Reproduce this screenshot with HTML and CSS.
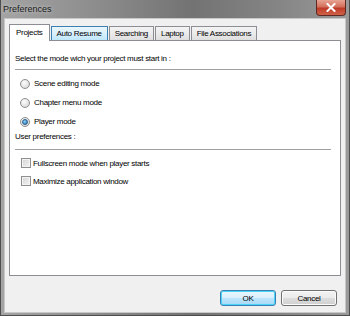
FILE: index.html
```html
<!DOCTYPE html>
<html lang="en">
<head>
    <meta charset="UTF-8">
    <title>Preferences</title>
    <link rel="stylesheet" href="styles.css">
</head>
<body>
    <div id="window">
        <div class="titlebar">
            <span class="title">Preferences</span>
            <div class="close-btn">
                <svg width="10" height="9" viewBox="0 0 10 9">
                    <path d="M1.5 1 L8.5 8 M8.5 1 L1.5 8" stroke="#fff" stroke-width="2" stroke-linecap="square"/>
                </svg>
            </div>
        </div>
        <div class="client">
            <div class="tabs">
                <div class="tab active">Projects</div>
                <div class="tab hover">Auto Resume</div>
                <div class="tab">Searching</div>
                <div class="tab">Laptop</div>
                <div class="tab">File Associations</div>
            </div>
            <div class="panel">
                <div class="section-title">Select the mode wich your project must start in :</div>
                <div class="sep"></div>
                <div class="options">
                    <label class="option radio-row"><span class="radio"></span>Scene editing mode</label>
                    <label class="option radio-row"><span class="radio"></span>Chapter menu mode</label>
                    <label class="option radio-row"><span class="radio checked"></span>Player mode</label>
                </div>
                <div class="section-title second">User preferences :</div>
                <div class="sep sep2"></div>
                <div class="options">
                    <label class="option check-row"><span class="checkbox"></span>Fullscreen mode when player starts</label>
                    <label class="option check-row"><span class="checkbox"></span>Maximize application window</label>
                </div>
            </div>
            <div class="buttons">
                <button class="default">OK</button>
                <button>Cancel</button>
            </div>
        </div>
    </div>
</body>
</html>
```

FILE: styles.css
```css
body {
    margin: 0;
    padding: 0;
    font-family: "Liberation Sans", Arial, sans-serif;
    font-size: 8px;
    letter-spacing: -0.3px;
    color: #000;
    background: #6b6b6b;
}

#window {
    width: 350px;
    height: 316px;
    display: flex;
    flex-direction: column;
    background: linear-gradient(to right, #a4a4a4, #8a8a8a 30%, #737373 55%, #858585 80%, #9a9a9a);
    box-sizing: border-box;
    border: 1px solid #4e4e4e;
    border-top: none;
}

.titlebar {
    height: 18px;
    position: relative;
    display: flex;
    align-items: center;
    padding-left: 2px;
}

.title {
    font-size: 9px;
    letter-spacing: 0;
    color: #1a1a1a;
    text-shadow: 0 0 4px rgba(255, 255, 255, 0.6);
}

.close-btn {
    position: absolute;
    right: 3px;
    top: 0;
    width: 30px;
    height: 16px;
    box-sizing: border-box;
    border: 1px solid #5c2a22;
    border-top: none;
    border-radius: 0 0 4px 4px;
    background: linear-gradient(to bottom, #e8a493, #d3705c 45%, #be3b26 55%, #d0624a);
    display: flex;
    align-items: center;
    justify-content: center;
}

.client {
    flex: 1;
    margin: 0 3px 2px 3px;
    background: #f0f0f0;
    border: 1px solid #c8c8c8;
    padding: 5px 4px 0 4px;
    display: flex;
    flex-direction: column;
}

.tabs {
    display: flex;
    align-items: flex-end;
    height: 16px;
    position: relative;
    z-index: 1;
}

.tab {
    height: 14px;
    box-sizing: border-box;
    padding: 0 5px;
    margin-right: 1px;
    line-height: 13px;
    border: 1px solid #8c8e94;
    border-bottom: none;
    background: linear-gradient(to bottom, #f3f3f3, #ebebeb 50%, #dedede);
}

.tab.hover {
    border-color: #3c7fb1;
    background: linear-gradient(to bottom, #eaf6fd, #d9f0fc 50%, #bee6fd);
}

.tab.active {
    height: 17px;
    margin-bottom: -1px;
    padding: 0 6px 0 6px;
    line-height: 15px;
    background: #fff;
}

.panel {
    height: 236px;
    box-sizing: border-box;
    background: #fff;
    border: 1px solid #8c8e94;
    padding: 0 5px;
}

.section-title {
    margin-top: 13px;
    height: 10px;
    line-height: 10px;
}

.section-title.second {
    margin-top: 1px;
}

.sep {
    margin-top: 5px;
    height: 1px;
    background: #a0a0a0;
    margin-right: 4px;
}

.sep2 {
    margin-top: 7px;
}

.options {
    margin-top: 4px;
}

.option {
    display: flex;
    align-items: center;
}

.radio-row {
    height: 19px;
    padding-left: 5px;
}

.check-row {
    height: 18px;
    padding-left: 6px;
}

.radio {
    width: 10px;
    height: 10px;
    box-sizing: border-box;
    border-radius: 50%;
    border: 1px solid #8e8f8f;
    background: radial-gradient(circle at 40% 35%, #fefefe, #e2e2e2 60%, #cfcfcf);
    margin-right: 4px;
    display: flex;
    align-items: center;
    justify-content: center;
}

.radio.checked::after {
    content: "";
    width: 4px;
    height: 4px;
    border-radius: 50%;
    background: radial-gradient(circle at 35% 35%, #8fd2f6, #1b6fb5);
    border: 1px solid #2a5c8c;
}

.checkbox {
    width: 10px;
    height: 10px;
    box-sizing: border-box;
    border: 1px solid #8e8f8f;
    background: linear-gradient(135deg, #d4d4d4, #f4f4f4);
    box-shadow: inset 0 0 0 1px #f4f4f4;
    margin-right: 2px;
}

.buttons {
    display: flex;
    justify-content: flex-end;
    gap: 5px;
    margin-top: 14px;
    padding-right: 4px;
}

button {
    width: 56px;
    height: 16px;
    padding: 0;
    font-family: "Liberation Sans", Arial, sans-serif;
    font-size: 8px;
    letter-spacing: -0.3px;
    color: #000;
    border: 1px solid #707070;
    border-radius: 3px;
    background: linear-gradient(to bottom, #f2f2f2, #ebebeb 50%, #dddddd 51%, #cfcfcf);
    box-shadow: inset 0 0 0 1px #fcfcfc;
}

button.default {
    border-color: #3c7fb1;
    box-shadow: inset 0 0 0 1px #48d5fb;
    background: linear-gradient(to bottom, #eaf6fd, #d9f0fc 50%, #bee6fd 51%, #a7d9f5);
}
```
